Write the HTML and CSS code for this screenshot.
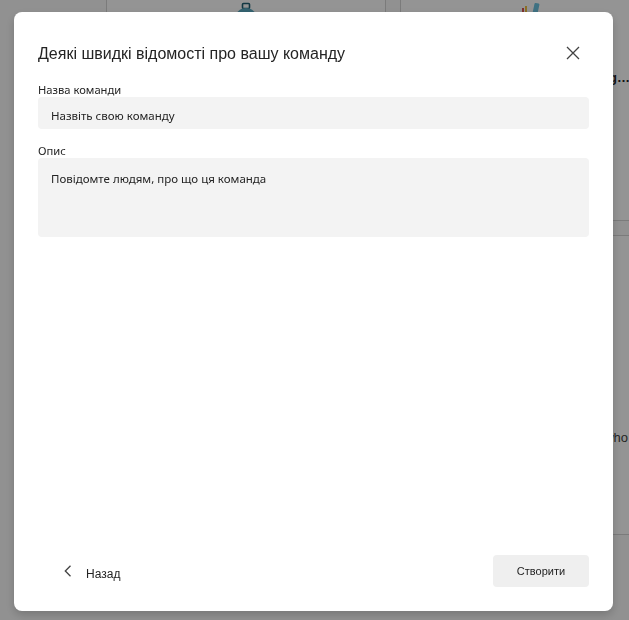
FILE: index.html
```html
<!DOCTYPE html>
<html lang="uk">
<head>
<meta charset="utf-8">
<title>Команда</title>
<link rel="stylesheet" href="styles.css">
</head>
<body>
<div class="page">
  <div class="cards">
    <div class="card">
      <div class="card-art">
        <svg width="24" height="24" viewBox="0 0 24 24"><rect x="8.5" y="1.5" width="7" height="5" rx="1" fill="none" stroke="#1f5f73" stroke-width="1.6"/><circle cx="12" cy="17" r="11" fill="#5aa9c0"/></svg>
      </div>
    </div>
    <div class="card">
      <div class="card-art">
        <svg width="40" height="24" viewBox="0 0 40 24"><rect x="2" y="6" width="2" height="10" fill="#d9534f"/><rect x="5" y="4" width="2" height="12" fill="#f0c040"/><rect x="13" y="1" width="5" height="16" rx="1" transform="rotate(12 15 9)" fill="#6cc3e0"/></svg>
      </div>
      <div class="card-title">Onboarding…</div>
    </div>
    <div class="card"></div>
    <div class="card">
      <div class="card-desc">Share with people who</div>
    </div>
  </div>
</div>

<div class="overlay">
  <div class="dialog" role="dialog">
    <div class="dlg-header">
      <h1 class="dlg-title">Деякі швидкі відомості про вашу команду</h1>
      <button class="close" aria-label="Закрити">
        <svg width="14" height="14" viewBox="0 0 14 14"><path d="M1 1L13 13M13 1L1 13" stroke="#424242" stroke-width="1.3" fill="none"/></svg>
      </button>
    </div>
    <div class="dlg-body">
      <label class="field">
        <span class="field-label">Назва команди</span>
        <input class="field-input" placeholder="Назвіть свою команду">
      </label>
      <label class="field field-gap">
        <span class="field-label">Опис</span>
        <textarea class="field-area" placeholder="Повідомте людям, про що ця команда"></textarea>
      </label>
    </div>
    <div class="dlg-footer">
      <button class="back">
        <svg width="10" height="12" viewBox="0 0 10 12"><path d="M7.5 0.8L2.3 6L7.5 11.2" stroke="#424242" stroke-width="1.3" fill="none"/></svg>
        <span class="back-text">Назад</span>
      </button>
      <button class="create">Створити</button>
    </div>
  </div>
</div>
</body>
</html>
```
FILE: styles.css
```css
html, body {
  margin: 0;
  height: 100%;
}
body {
  font-family: "Liberation Sans", Arial, sans-serif;
  background: #fafafa;
  overflow: hidden;
  color: #242424;
}
.page {
  height: 620px;
  overflow: hidden;
}
.cards {
  display: grid;
  grid-template-columns: 280px 280px;
  grid-template-rows: 261px 300px;
  gap: 14px;
  margin-left: 106px;
  margin-top: -40px;
}
.card {
  background: #fff;
  border: 1px solid #d4d4d4;
  border-radius: 4px;
}
.card-art {
  padding-top: 41px;
  height: 24px;
  display: flex;
  justify-content: center;
}
.card-title {
  margin-top: 43px;
  width: 229px;
  text-align: right;
  white-space: nowrap;
  font-weight: bold;
  font-size: 13px;
  line-height: 17px;
  color: #242424;
}
.card-desc {
  padding-top: 193px;
  width: 227px;
  text-align: right;
  white-space: nowrap;
  font-size: 13px;
  line-height: 18px;
  color: #424242;
}
.overlay {
  position: fixed;
  inset: 0;
  background: rgba(0, 0, 0, 0.42);
  display: flex;
  box-sizing: border-box;
  padding: 12px 16px 9px 14px;
}
.dialog {
  flex: 1;
  background: #fff;
  border-radius: 8px;
  box-shadow: 0 4px 10px rgba(0, 0, 0, 0.18);
  padding: 24px;
  display: flex;
  flex-direction: column;
}
.dlg-header {
  height: 35px;
  display: flex;
  align-items: center;
  justify-content: space-between;
}
.dlg-title {
  margin: 0;
  font-weight: normal;
  font-size: 16px;
  color: #242424;
}
.close {
  width: 24px;
  height: 24px;
  margin-right: 4px;
  margin-top: -1px;
  padding: 0;
  border: 0;
  background: transparent;
  display: flex;
  align-items: center;
  justify-content: center;
}
.dlg-body {
  margin-top: 12px;
  display: flex;
  flex-direction: column;
}
.field {
  display: flex;
  flex-direction: column;
}
.field-gap {
  margin-top: 15px;
}
.field-label {
  font-family: "Noto Sans", sans-serif;
  font-size: 11.2px;
  line-height: 14px;
  color: #242424;
}
.field-input, .field-area {
  border: 0;
  outline: 0;
  background: #f3f3f3;
  border-radius: 4px;
  font-family: "Noto Sans", sans-serif;
  font-size: 11.5px;
  color: #242424;
  box-sizing: border-box;
  padding: 0 13px;
}
.field-input {
  height: 32px;
  padding-top: 5px;
}
.field-area {
  height: 79px;
  padding-top: 12px;
  resize: none;
  line-height: 17px;
}
.field-input::placeholder, .field-area::placeholder {
  color: #242424;
  opacity: 1;
}
.dlg-footer {
  margin-top: auto;
  height: 32px;
  display: flex;
  align-items: center;
  justify-content: space-between;
}
.back {
  display: flex;
  align-items: center;
  gap: 13px;
  padding: 0 0 0 25px;
  border: 0;
  background: transparent;
  font-family: "Liberation Sans", Arial, sans-serif;
  font-size: 12px;
  color: #242424;
}
.back-text {
  margin-top: 5px;
}
.create {
  width: 96px;
  height: 32px;
  border: 0;
  border-radius: 4px;
  background: #efefef;
  font-family: "Liberation Sans", Arial, sans-serif;
  font-size: 11px;
  color: #242424;
}
```
